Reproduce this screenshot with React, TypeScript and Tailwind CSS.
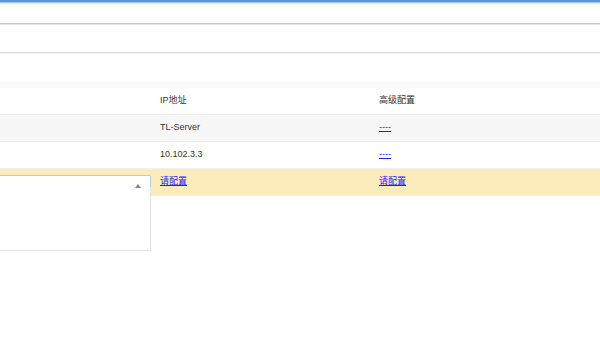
const rows = [
  { ip: "TL-Server", cfg: "----", bg: "bg-[#f7f7f7]", link: false },
  { ip: "10.102.3.3", cfg: "----", bg: "bg-white", link: false },
  { ip: "请配置", cfg: "请配置", bg: "bg-[#fdecbb]", link: true },
];

const font = "font-['Liberation_Sans','Noto_Sans_CJK_SC',sans-serif]";

const App = () => {
  return (
    <div className={`relative w-[600px] h-[345px] bg-white overflow-hidden text-[9px] text-[#333] ${font}`}>
      {/* top bar */}
      <div className="h-[2px] bg-[#5a98d6]" />
      <div className="h-[1px] bg-[#9cc4ec]" />
      <div className="h-[3px] bg-gradient-to-b from-[#ececec] to-white" />
      <div className="h-[17px]" />
      <div className="h-[1px] bg-[#c6c6c6]" />
      <div className="h-[1px] bg-[#e6e6e6]" />

      <div className="h-[27px]" />
      <div className="h-[1px] bg-[#dadada]" />
      <div className="h-[1px] bg-[#f0f0f0]" />

      <div className="h-[28px]" />
      <div className="h-[6px] bg-[#fafafa]" />

      {/* table */}
      <div className="grid grid-cols-[150px_219px_1fr] h-[27px] items-center border-b border-[#efefef]">
        <div />
        <div className="pl-[10px]">IP地址</div>
        <div className="pl-[10px]">高级配置</div>
      </div>
      {rows.map((r, i) => (
        <div
          key={i}
          className={`grid grid-cols-[150px_219px_1fr] h-[27px] items-center border-b border-[#efefef] ${r.bg}`}
        >
          <div />
          <div className="pl-[10px]">
            {r.link ? <a href="#" className="text-[#1a1aff] underline">{r.ip}</a> : r.ip}
          </div>
          <div className="pl-[10px]">
            <a href="#" className="text-[#1a1aff] underline">{r.cfg}</a>
          </div>
        </div>
      ))}

      {/* open select dropdown */}
      <div className="absolute left-0 top-[175px] w-[151px] h-[76px] bg-white border border-l-0 border-[#e2e2e2] border-t-[#a9d3ec]">
        <div className="absolute right-[-1px] top-0 h-[11px] w-[1px] bg-[#a9d3ec]" />
        <div className="absolute right-[9px] top-[8px] w-0 h-0 border-l-[3px] border-r-[3px] border-b-[4px] border-l-transparent border-r-transparent border-b-[#888]" />
      </div>
    </div>
  );
};

export default App;
